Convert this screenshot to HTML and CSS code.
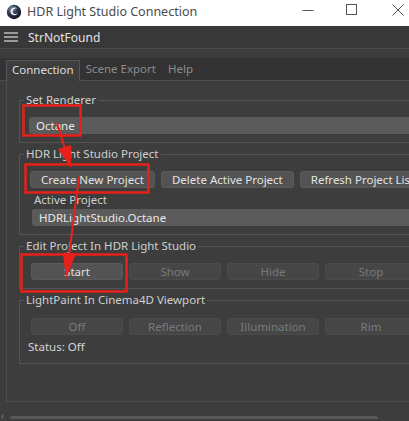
FILE: index.html
```html
<!DOCTYPE html>
<html>
<head>
<meta charset="utf-8">
<link rel="stylesheet" href="styles.css">
</head>
<body>
<div class="window">
  <div class="titlebar">
    <svg class="app-icon" width="16" height="16" viewBox="0 0 16 16">
      <defs>
        <radialGradient id="sph" cx="0.35" cy="0.3" r="0.8">
          <stop offset="0" stop-color="#8a96b8"/>
          <stop offset="0.45" stop-color="#2b3552"/>
          <stop offset="1" stop-color="#0b0e16"/>
        </radialGradient>
      </defs>
      <circle cx="8" cy="8" r="7.2" fill="url(#sph)"/>
      <path d="M11.5 4.2 C9.5 2.8 5.6 3.3 4.7 6.6 C4 9.4 6.2 11.8 9 11.2 C10.2 10.9 11.1 10.1 11.6 9.2 C10.6 9.9 9.4 10.2 8.3 9.9 C6.5 9.4 6 7.4 6.9 6 C7.9 4.5 10 4.3 11.5 4.2 Z" fill="#f2f4f8"/>
    </svg>
    <span class="title">HDR Light Studio Connection</span>
    <div class="controls">
      <svg width="12" height="12" viewBox="0 0 12 12"><path d="M0.5 6.5 H11.5" stroke="#555" stroke-width="1"/></svg>
      <svg width="12" height="12" viewBox="0 0 12 12"><rect x="0.5" y="0.5" width="10" height="10" fill="none" stroke="#555" stroke-width="1"/></svg>
      <svg width="12" height="12" viewBox="0 0 12 12"><path d="M0.5 0.5 L11.5 11.5 M11.5 0.5 L0.5 11.5" stroke="#555" stroke-width="1"/></svg>
    </div>
  </div>

  <div class="menubar">
    <svg class="hamburger" width="14" height="12" viewBox="0 0 14 12">
      <rect x="0" y="1" width="14" height="2" fill="#9a9a9a"/>
      <rect x="0" y="5" width="14" height="2" fill="#9a9a9a"/>
      <rect x="0" y="9" width="14" height="2" fill="#9a9a9a"/>
    </svg>
    <span class="menu-title">StrNotFound</span>
  </div>

  <div class="strip-gap"></div>

  <div class="tabs">
    <div class="tab active">Connection</div>
    <div class="tab">Scene Export</div>
    <div class="tab">Help</div>
  </div>

  <div class="page">
    <fieldset class="group">
      <legend>Set Renderer</legend>
      <div class="select first">Octane</div>
    </fieldset>

    <fieldset class="group">
      <legend>HDR Light Studio Project</legend>
      <div class="row">
        <div class="btn">Create New Project</div>
        <div class="btn">Delete Active Project</div>
        <div class="btn">Refresh Project List</div>
      </div>
      <div class="sublabel">Active Project</div>
      <div class="select sub">HDRLightStudio.Octane</div>
    </fieldset>

    <fieldset class="group">
      <legend>Edit Project In HDR Light Studio</legend>
      <div class="row fixed">
        <div class="btn">Start</div>
        <div class="btn disabled">Show</div>
        <div class="btn disabled">Hide</div>
        <div class="btn disabled">Stop</div>
      </div>
    </fieldset>

    <fieldset class="group">
      <legend>LightPaint In Cinema4D Viewport</legend>
      <div class="row fixed lp">
        <div class="btn disabled">Off</div>
        <div class="btn disabled">Reflection</div>
        <div class="btn disabled">Illumination</div>
        <div class="btn disabled">Rim</div>
      </div>
      <div class="status">Status: Off</div>
    </fieldset>
  </div>

  <div class="hscroll">
    <span class="scroll-arrow">‹</span>
    <div class="thumb"></div>
  </div>

  <svg class="annot" width="409" height="421" viewBox="0 0 409 421">
    <g fill="none" stroke="#e8201a" stroke-width="2.5">
      <rect x="23.5" y="105.5" width="57" height="30"/>
      <rect x="25.5" y="164.5" width="123" height="28"/>
      <rect x="21.5" y="254.5" width="105" height="37"/>
      <path d="M57 123 L64.5 147" stroke-width="2"/>
      <path d="M79 177 L69.3 253" stroke-width="2"/>
    </g>
    <g fill="#e8201a">
      <polygon points="71,168 71.2,144.9 57.8,149.1"/>
      <polygon points="66,279 75.7,254 62.9,252.4"/>
    </g>
  </svg>
</div>
</body>
</html>
```

FILE: styles.css
```css
* { box-sizing: border-box; }

html, body {
  margin: 0;
  padding: 0;
  background: #3d3d3d;
}

.window {
  position: relative;
  width: 409px;
  height: 421px;
  overflow: hidden;
  background: #3d3d3d;
  font-family: "Noto Sans", "Open Sans", sans-serif;
  font-size: 11.5px;
  color: #d6d6d6;
}

/* Title bar */
.titlebar {
  height: 26px;
  background: #ffffff;
  display: flex;
  align-items: center;
  padding-left: 6px;
}

.app-icon { flex: none; margin-top: -3px; }

.title {
  margin-left: 5px;
  font-size: 12.5px;
  color: #4a4a4a;
  margin-top: -3px;
  flex: 1;
  white-space: nowrap;
}

.controls {
  display: flex;
  align-items: center;
  margin-top: -6px;
}
.controls svg { display: block; }
.controls svg:nth-child(1) { margin-right: 32px; }
.controls svg:nth-child(2) { margin-right: 34px; }
.controls svg:nth-child(3) { margin-right: 5px; }

/* Menu bar */
.menubar {
  height: 23px;
  background: #383838;
  border-bottom: 1px solid #4b4b4b;
  display: flex;
  align-items: center;
  padding-left: 4px;
}
.hamburger { flex: none; }
.menu-title {
  margin-left: 10px;
  color: #e2e2e2;
  font-size: 12px;
}

.strip-gap { height: 9px; background: #3d3d3d; }

/* Tabs */
.tabs {
  height: 23px;
  background: #333333;
  border-bottom: 1px solid #4e4e4e;
  display: flex;
  align-items: flex-end;
  padding-left: 6px;
}
.tab {
  height: 20px;
  line-height: 18px;
  padding: 0 6px;
  color: #8c8c8c;
  white-space: nowrap;
}
.tab.active {
  background: #3d3d3d;
  border: 1px solid #565656;
  border-bottom: none;
  color: #dedede;
  height: 21px;
  margin-bottom: -1px;
  padding: 0 5px;
}
.tab:last-child { padding-left: 6px; }

/* Page */
.page {
  margin-left: 6px;
  width: 460px;
  border-left: 1px solid #4e4e4e;
  border-bottom: 1px solid #4e4e4e;
  padding: 11px 0 37px 12px;
}

.group {
  margin: 0 0 3px 0;
  padding: 0 0 8px 10px;
  border: 1px solid #545454;
  min-width: 0;
}
.group:last-child { margin-bottom: 0; }

.group legend {
  margin-left: -6px;
  padding: 0 2px;
  line-height: 16px;
  color: #cfcfcf;
  white-space: nowrap;
}

.select {
  height: 17px;
  line-height: 17px;
  background: #5b5b5b;
  border-radius: 3px;
  padding-left: 7px;
  color: #e8e8e8;
  margin-top: 9px;
}
.select.first { margin-left: -1px; }
.select.sub { margin-top: 1px; margin-left: 2px; }

.row {
  display: flex;
  gap: 6px;
  margin-top: 9px;
}
.row.lp { margin-top: 10px; }

.btn {
  height: 17px;
  line-height: 16px;
  background: #535353;
  border: 1px solid #5a5a5a;
  border-radius: 3px;
  padding: 0 10px;
  color: #e2e2e2;
  white-space: nowrap;
  text-align: center;
}
.row.fixed .btn { width: 92px; padding: 0; }
.row.fixed { margin-left: 1px; }

.btn.disabled {
  background: #464646;
  border-color: #4b4b4b;
  color: #767b80;
}

.sublabel {
  margin-top: 4px;
  margin-left: 4px;
  line-height: 16px;
  color: #d0d0d0;
}

.status {
  margin-top: 4px;
  margin-left: -2px;
  line-height: 16px;
  color: #d6d6d6;
}

/* Bottom scrollbar */
.hscroll {
  height: 17px;
  display: flex;
  align-items: flex-end;
}
.scroll-arrow {
  width: 10px;
  color: #8a8a8a;
  font-size: 9px;
  line-height: 6px;
  padding-left: 1px;
}
.thumb {
  width: 368px;
  height: 3px;
  background: #585858;
  border-radius: 2px 2px 0 0;
}

/* Annotation overlay */
.annot {
  position: absolute;
  left: 0;
  top: 0;
  pointer-events: none;
}
```
